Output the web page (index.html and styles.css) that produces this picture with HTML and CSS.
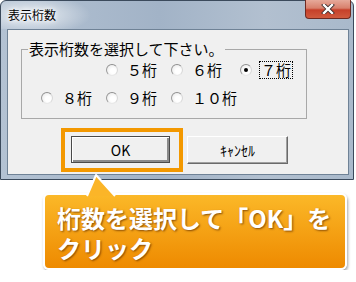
FILE: index.html
```html
<!DOCTYPE html>
<html lang="ja">
<head>
    <meta charset="UTF-8">
    <title>表示桁数</title>
    <link rel="stylesheet" href="styles.css">
</head>
<body>
    <div class="window">
        <div class="titlebar">
            <span class="title">表示桁数</span>
            <div class="close">
                <svg width="14" height="10" viewBox="0 0 14 10">
                    <path d="M3 1 L11 9 M11 1 L3 9" stroke="#3a2a2a" stroke-width="4" stroke-linecap="square"/>
                    <path d="M3 1 L11 9 M11 1 L3 9" stroke="#fff" stroke-width="2.4" stroke-linecap="square"/>
                </svg>
            </div>
        </div>

        <div class="client">
            <fieldset class="group">
                <legend>表示桁数を選択して下さい。</legend>
                <div class="options">
                    <label class="opt col2"><span class="radio"></span>５桁</label>
                    <label class="opt"><span class="radio"></span>６桁</label>
                    <label class="opt"><span class="radio checked"></span><span class="focus">７桁</span></label>
                    <label class="opt"><span class="radio"></span>８桁</label>
                    <label class="opt"><span class="radio"></span>９桁</label>
                    <label class="opt"><span class="radio"></span>１０桁</label>
                </div>
            </fieldset>

            <div class="buttons">
                <div class="highlight">
                    <button class="btn default">OK</button>
                </div>
                <button class="btn cancel">ｷｬﾝｾﾙ</button>
            </div>
        </div>
    </div>

    <div class="callout">
        <svg class="arrow" width="36" height="24" viewBox="0 0 36 24">
            <path d="M2 23 L11 2 L30 23" fill="#fbb528" stroke="#fff" stroke-width="2" stroke-linejoin="round"/>
        </svg>
        <p>桁数を選択して「OK」を<br>クリック</p>
    </div>
</body>
</html>
```

FILE: styles.css
```css
body {
    margin: 0;
    background-color: #fff;
    font-family: "Noto Sans CJK JP", "Noto Sans", sans-serif;
}
.window {
    width: 342px;
    padding: 0 4px 4px 6px;
    border: 1px solid #3b4a5c;
    border-radius: 6px 6px 0 0;
    background: linear-gradient(90deg, #b3c2d3 0%, #a2b3c7 45%, #b2c0d0 75%, #a9b9cb 100%);
}
.titlebar {
    display: flex;
    justify-content: space-between;
    align-items: flex-start;
    height: 28px;
    margin: 0 -4px 0 -6px;
    padding-left: 7px;
    background: radial-gradient(ellipse 60px 20px at 30px 14px, rgba(255,255,255,0.75), rgba(255,255,255,0) 100%);
    border-radius: 6px 6px 0 0;
}
.title {
    font-size: 12px;
    line-height: 12px;
    margin-top: 8px;
    color: #000;
    text-shadow: 0 0 6px #fff, 0 0 4px #fff;
}
.close {
    width: 46px;
    height: 19px;
    margin: -1px 2px 0 0;
    display: flex;
    align-items: center;
    justify-content: center;
    border: 1px solid #6e2a22;
    border-top: none;
    border-radius: 0 0 4px 4px;
    background: linear-gradient(#e6a99a 0%, #d8806c 45%, #c6402a 55%, #d05a3e 100%);
    box-sizing: border-box;
}
.client {
    border: 1px solid #6f8296;
    background-color: #f0f0f0;
    padding: 0 0 2px 0;
    font-size: 15px;
    color: #000;
}
.group {
    margin: 11px 0 0 13px;
    width: 286px;
    padding: 4px 0 11px 19px;
    border: 1px solid #a8a8a8;
    box-sizing: border-box;
}
.group legend {
    padding: 0 1px;
    margin-left: -13px;
    line-height: 16px;
}
.options {
    display: grid;
    grid-template-columns: 65px 65px 69px auto;
    row-gap: 10px;
}
.opt {
    display: flex;
    align-items: center;
    gap: 9px;
    height: 18px;
    line-height: 16px;
    white-space: nowrap;
}
.col2 {
    grid-column-start: 2;
}
.radio {
    width: 12px;
    height: 12px;
    flex: none;
    border-radius: 50%;
    box-sizing: border-box;
    border: 1px solid;
    border-color: #8f8f8f #d8d8d8 #e8e8e8 #9a9a9a;
    background: radial-gradient(circle at 60% 60%, #fff 30%, #e4e4e4 100%);
    display: flex;
    align-items: center;
    justify-content: center;
}
.radio.checked::after {
    content: "";
    width: 4px;
    height: 4px;
    border-radius: 50%;
    background-color: #000;
}
.focus {
    border: 1px dotted #000;
    padding: 0 1px;
    margin-left: -2px;
}
.buttons {
    display: flex;
    align-items: flex-start;
    gap: 4px;
    margin: 9px 0 0 53px;
}
.highlight {
    border: 4px solid #f39800;
    padding: 4px 9px 5px 6px;
}
.btn {
    width: 99px;
    height: 27px;
    padding: 0;
    font-family: "Noto Sans CJK JP", sans-serif;
    font-size: 14px;
    color: #000;
    background-color: #f0f0f0;
    border: 1px solid;
    border-color: #fff #6a6a6a #6a6a6a #fff;
    box-shadow: inset -1px -1px 0 #a0a0a0;
}
.btn.default {
    border: 1px solid #4a4a4a;
    box-shadow: inset 1px 1px 0 #fff, inset -2px -2px 0 #8a8a8a;
}
.cancel {
    width: 101px;
    height: 28px;
    margin-top: 8px;
}
.callout {
    position: relative;
    width: 300px;
    margin: 13px 0 0 43px;
    border: 2px solid #fff;
    border-radius: 6px;
    background: linear-gradient(#fbb828, #ee8a00);
    box-shadow: 1px 2px 3px rgba(0,0,0,0.35);
}
.arrow {
    position: absolute;
    left: 40px;
    top: -22px;
}
.callout p {
    margin: 0;
    padding: 8px 0 5px 12px;
    font-size: 24px;
    line-height: 30px;
    font-weight: bold;
    color: #fff;
    text-shadow: 1px 1px 2px rgba(90,40,0,0.7);
}
```
